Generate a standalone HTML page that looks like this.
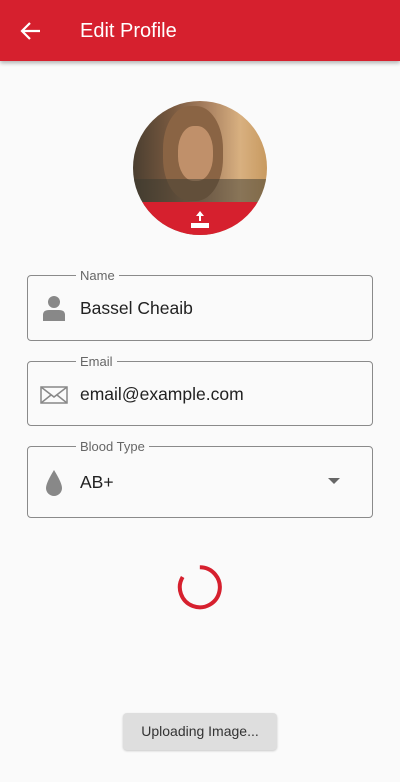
<html><head><style>
body{margin:0;width:400px;height:782px;background:#fafafa;font-family:"Liberation Sans",sans-serif;position:relative;overflow:hidden}
.bar{position:absolute;left:0;top:0;width:400px;height:61px;background:#d6202e;box-shadow:0 2px 4px rgba(0,0,0,.3)}
.bar span{position:absolute;left:80px;top:20px;color:#fff;font-size:20px}
.f{position:absolute;left:27px;width:344px;border:1px solid #8a8a8a;border-radius:4px}
.f label{position:absolute;left:48px;top:-7px;background:#fafafa;padding:0 4px;font-size:13px;line-height:13px;color:#666}
.f .v{position:absolute;left:52px;font-size:17.5px;color:#222}
</style></head><body>
<div class="bar"><svg style="position:absolute;left:20px;top:20px" width="22" height="22" viewBox="0 0 22 22"><path d="M20 11H3M10 3L2 11L10 19" stroke="#fff" stroke-width="2.2" fill="none"/></svg><span>Edit Profile</span></div>
<div style="position:absolute;left:133px;top:101px;width:134px;height:134px;border-radius:50%;overflow:hidden;background:linear-gradient(90deg,#4a3e30 0%,#7a5a40 30%,#a88060 55%,#d8b080 80%,#c89a60 100%)">
<div style="position:absolute;left:30px;top:5px;width:60px;height:95px;border-radius:45%;background:#8a6444"></div>
<div style="position:absolute;left:45px;top:25px;width:35px;height:55px;border-radius:45%;background:#c0906a"></div>
<div style="position:absolute;left:0;top:78px;width:134px;height:24px;background:#3a3a30;opacity:.5"></div>
<div style="position:absolute;left:0;top:101px;width:134px;height:40px;background:#d6202e"></div>
<svg style="position:absolute;left:58px;top:108px" width="18" height="20" viewBox="0 0 18 20"><path d="M9 2L5 7H8V12H10V7H13Z" fill="#fff"/><rect x="0" y="14" width="18" height="5" fill="#fff"/></svg></div>
<div class="f" style="top:275px;height:64px"><label>Name</label>
<svg style="position:absolute;left:14px;top:19px" width="24" height="27" viewBox="0 0 24 27"><circle cx="12" cy="7" r="6" fill="#888"/><path d="M1 26V20Q1 15 7 15H17Q23 15 23 20V26Z" fill="#888"/></svg>
<span class="v" style="top:22px">Bassel Cheaib</span></div>
<div class="f" style="top:361px;height:63px"><label>Email</label>
<svg style="position:absolute;left:12px;top:24px" width="28" height="18" viewBox="0 0 28 18"><rect x="1" y="1" width="26" height="16" fill="none" stroke="#888" stroke-width="1.5"/><path d="M1 1L14 11L27 1M1 17L11 9M27 17L17 9" fill="none" stroke="#888" stroke-width="1.5"/></svg>
<span class="v" style="top:22px">email@example.com</span></div>
<div class="f" style="top:446px;height:70px"><label>Blood Type</label>
<svg style="position:absolute;left:16px;top:22px" width="20" height="28" viewBox="0 0 20 28"><path d="M10 1Q2 14 2 19A8 8 0 0 0 18 19Q18 14 10 1Z" fill="#888"/></svg>
<span class="v" style="top:25px">AB+</span>
<svg style="position:absolute;left:300px;top:31px" width="12" height="7"><path d="M0 0H12L6 6Z" fill="#666"/></svg></div>
<svg style="position:absolute;left:176px;top:563px" width="48" height="48" viewBox="0 0 48 48"><path d="M24 4A20 20 0 1 0 41 14" fill="none" stroke="#d6202e" stroke-width="4" transform="rotate(-60 24 24)"/></svg>
<div style="position:absolute;left:123px;top:713px;width:154px;height:37px;background:#dedede;border-radius:4px;box-shadow:0 1px 2px rgba(0,0,0,.2);text-align:center;line-height:37px;font-size:14px;color:#333">Uploading Image...</div>
</body></html>
